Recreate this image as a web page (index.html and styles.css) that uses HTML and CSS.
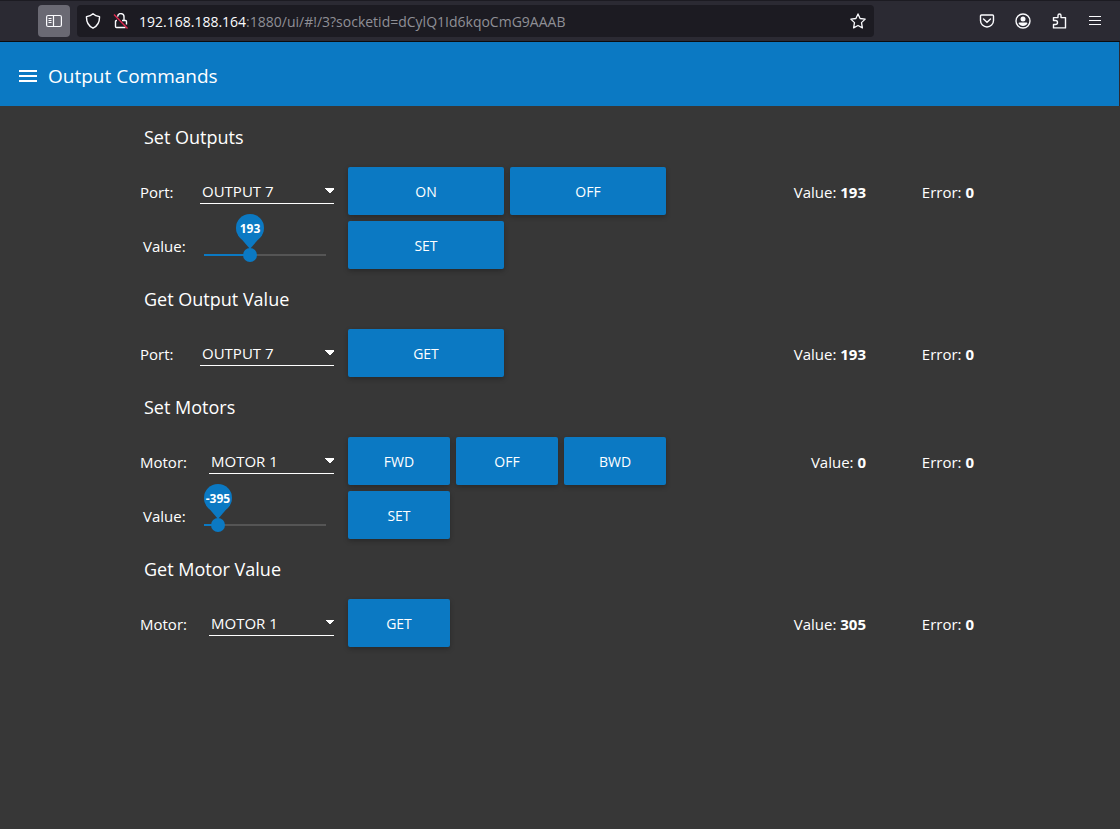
FILE: index.html
```html
<!DOCTYPE html>
<html lang="en">
<head>
    <meta charset="UTF-8">
    <meta name="viewport" content="width=device-width, initial-scale=1.0">
    <title>Output Commands</title>
    <link rel="stylesheet" href="styles.css">
</head>
<body>
    <div class="browser-bar">
        <button class="bar-button sidebar-button" aria-label="Sidebar">
            <svg width="16" height="16" viewBox="0 0 16 16" fill="none" stroke="currentColor" stroke-width="1.2">
                <rect x="0.6" y="2.5" width="14.8" height="11" rx="1.5" />
                <path d="M7.500 2.500v11M2.500 5.500h3M2.500 7.500h3M2.500 9.500h3" />
            </svg>
        </button>
        <div class="url-bar">
            <svg width="16" height="16" viewBox="0 0 16 16" fill="none" stroke="currentColor" stroke-width="1.4">
                <path d="M8 .8C6.500 2.200 4 3.200 1.500 3.600C1.300 8.500 3.400 13 8 15.200C12.600 13 14.700 8.500 14.500 3.600C12 3.200 9.500 2.200 8 .8Z" stroke-linejoin="round" />
            </svg>
            <svg class="lock" width="16" height="16" viewBox="0 0 16 16" fill="none" stroke="currentColor" stroke-width="1.4">
                <path d="M4.600 3.600A3.200 3.200 0 0 1 11 4v3.500M9 7.500h3.500a1 1 0 0 1 1 1v3M4 7.500H3.500a1 1 0 0 0-1 1v5a1 1 0 0 0 1 1h9" />
                <path d="M1 1.500l13.500 14" stroke="#e22850" />
            </svg>
            <p class="url-text"><span>192.168.188.164</span>:1880/ui/#!/3?socketid=dCylQ1Id6kqoCmG9AAAB</p>
            <svg width="16" height="16" viewBox="0 0 16 16" fill="none" stroke="currentColor" stroke-width="1.3" stroke-linejoin="round">
                <path d="M8 .9l2.100 4.600 5.100.6-3.700 3.500.9 5.300L8 12.500l-4.400 2.400.9-5.300L.8 6.100l5.100-.6Z" />
            </svg>
        </div>
        <div class="bar-tools">
            <button class="bar-button" aria-label="Pocket">
                <svg width="16" height="16" viewBox="0 0 16 16" fill="none" stroke="currentColor" stroke-width="1.4">
                    <path d="M2.500 2h11a1 1 0 0 1 1 1v4.500a6.500 6.500 0 0 1-13 0V3a1 1 0 0 1 1-1Z" />
                    <path d="M4.500 6l3.500 3.300L11.500 6" stroke-linecap="round" />
                </svg>
            </button>
            <button class="bar-button" aria-label="Account">
                <svg width="16" height="16" viewBox="0 0 16 16" fill="none" stroke="currentColor" stroke-width="1.4">
                    <circle cx="8" cy="8" r="7" />
                    <circle cx="8" cy="6" r="2.500" fill="currentColor" stroke="none" />
                    <path d="M3.500 10.200a1 1 0 0 1 1-.7h7a1 1 0 0 1 1 .7C11.500 12 10 13 8 13s-3.500-1-4.500-2.800Z" fill="currentColor" stroke="none" />
                </svg>
            </button>
            <button class="bar-button" aria-label="Extensions">
                <svg width="16" height="16" viewBox="0 0 16 16" fill="none" stroke="currentColor" stroke-width="1.4">
                    <path d="M2.500 7.500V4.600H7V2.500a1.500 1.500 0 0 1 3 0v2.100h4.500v10.300h-12V11.500h2a2 2 0 0 0 0-4Z" stroke-linejoin="round" />
                </svg>
            </button>
            <button class="bar-button" aria-label="Menu">
                <svg width="16" height="16" viewBox="0 0 16 16" fill="none" stroke="currentColor" stroke-width="1.2">
                    <path d="M2 3.500h12M2 7.500h12M2 11.500h12" />
                </svg>
            </button>
        </div>
    </div>

    <header class="toolbar">
        <button class="menu-button" aria-label="Open menu">
            <svg width="24" height="24" viewBox="0 0 24 24" fill="currentColor">
                <path d="M3 18h18v-2H3v2zm0-5h18v-2H3v2zm0-7v2h18V6H3z" />
            </svg>
        </button>
        <h1>Output Commands</h1>
    </header>

    <main class="group">
        <h2>Set Outputs</h2>
        <div class="field">
            <label for="set-port">Port:</label>
            <select id="set-port"><option>OUTPUT 7</option></select>
        </div>
        <button class="btn wide">ON</button>
        <button class="btn wide">OFF</button>
        <p class="value">Value: <b>193</b></p>
        <p class="error">Error: <b>0</b></p>

        <div class="field slider-field">
            <label for="output-value">Value:</label>
            <div class="slider" style="--pos: 0.377">
                <input type="range" id="output-value" min="0" max="512" value="193">
                <output class="pin" for="output-value">193</output>
            </div>
        </div>
        <button class="btn wide">SET</button>

        <h2>Get Output Value</h2>
        <div class="field">
            <label for="get-port">Port:</label>
            <select id="get-port"><option>OUTPUT 7</option></select>
        </div>
        <button class="btn wide">GET</button>
        <p class="value">Value: <b>193</b></p>
        <p class="error">Error: <b>0</b></p>

        <h2>Set Motors</h2>
        <div class="field motor">
            <label for="set-motor">Motor:</label>
            <select id="set-motor"><option>MOTOR 1</option></select>
        </div>
        <button class="btn">FWD</button>
        <button class="btn">OFF</button>
        <button class="btn">BWD</button>
        <p class="value">Value: <b>0</b></p>
        <p class="error">Error: <b>0</b></p>

        <div class="field slider-field">
            <label for="motor-value">Value:</label>
            <div class="slider" style="--pos: 0.114">
                <input type="range" id="motor-value" min="-512" max="512" value="-395">
                <output class="pin" for="motor-value">-395</output>
            </div>
        </div>
        <button class="btn">SET</button>

        <h2>Get Motor Value</h2>
        <div class="field motor">
            <label for="get-motor">Motor:</label>
            <select id="get-motor"><option>MOTOR 1</option></select>
        </div>
        <button class="btn">GET</button>
        <p class="value">Value: <b>305</b></p>
        <p class="error">Error: <b>0</b></p>
    </main>
</body>
</html>
```
FILE: styles.css
```css
* {
    box-sizing: border-box;
}

body {
    margin: 0;
    min-height: 100vh;
    background-color: #373737;
    color: #fff;
    font-family: "Open Sans", "Noto Sans", sans-serif;
    font-size: 15px;
}

button {
    font-family: inherit;
    color: inherit;
    border: none;
    padding: 0;
    background: none;
    cursor: pointer;
}

svg {
    display: block;
    flex: none;
}

/* Browser bar */
.browser-bar {
    display: flex;
    align-items: center;
    height: 42px;
    padding: 0 9px 0 38px;
    background-color: #2b2a33;
    border-top: 1px solid #1c1b22;
    border-bottom: 1px solid #0c0c0d;
    color: #fbfbfe;
}

.bar-button {
    display: flex;
    align-items: center;
    justify-content: center;
    width: 32px;
    height: 32px;
    border-radius: 4px;
}

.sidebar-button {
    background-color: #6a6973;
}

.url-bar {
    flex: 1;
    display: flex;
    align-items: center;
    height: 32px;
    margin-left: 7px;
    padding: 0 8px;
    border-radius: 4px;
    background-color: #1c1b22;
}

.lock {
    margin-left: 12px;
}

.url-text {
    flex: 1;
    margin: 0 0 0 10px;
    font-size: 14px;
    color: #8f8f96;
}

.url-text span {
    color: #fbfbfe;
}

.bar-tools {
    display: flex;
    gap: 4px;
    margin-left: 97px;
}

/* Page header */
.toolbar {
    display: flex;
    align-items: center;
    height: 64px;
    padding: 4px 16px 0;
    background-color: #0b79c3;
    border-right: 1px solid #2b2a33;
}

.menu-button {
    margin-right: 8px;
}

h1 {
    margin: 0;
    font-size: 19px;
    font-weight: 400;
}

/* Widget grid */
.group {
    display: grid;
    grid-template-columns: repeat(16, 48px);
    grid-auto-rows: 48px;
    gap: 6px;
    justify-content: center;
    align-items: center;
    padding: 7px 0 7px 2px;
}

h2 {
    grid-column: 1 / -1;
    margin: 0;
    padding-left: 12px;
    font-size: 18px;
    font-weight: 400;
}

.field {
    grid-column: 1 / span 4;
    display: flex;
    align-items: center;
    height: 48px;
    padding: 0 8px;
}

.field label {
    width: 60px;
    padding-top: 2px;
}

.field.motor label {
    width: 69px;
}

select {
    flex: 1;
    height: 26px;
    padding: 0 2px;
    appearance: none;
    border: none;
    border-bottom: 1px solid #fff;
    border-radius: 0;
    background: conic-gradient(from -45deg at 50% 100%, #fff 90deg, transparent 0) right -1px top 10px / 10px 5px no-repeat;
    color: inherit;
    font-family: inherit;
    font-size: 15px;
}

.slider-field {
    padding: 0 1px 0 11px;
}

.field.slider-field label {
    width: 54px;
}

.slider {
    position: relative;
    flex: none;
    width: 136px;
}

.slider input {
    display: block;
    width: 100%;
    height: 14px;
    margin: 20px 0 0;
    appearance: none;
    background: linear-gradient(to right, #0b79c3 calc(var(--pos) * 100%), #555 0) center / calc(100% - 14px) 2px no-repeat;
}

.slider input::-webkit-slider-thumb {
    appearance: none;
    width: 14px;
    height: 14px;
    border-radius: 50%;
    background-color: #0b79c3;
}

/* Value bubble over the thumb */
.pin {
    position: absolute;
    bottom: 20px;
    left: calc(7px + var(--pos) * (100% - 14px));
    width: 28px;
    height: 28px;
    margin-left: -14px;
    border-radius: 50%;
    background-color: #0b79c3;
    font-size: 12px;
    font-weight: 700;
    line-height: 30px;
    text-align: center;
}

.pin::after {
    content: "";
    position: absolute;
    top: 21px;
    left: 2px;
    border: 12px solid transparent;
    border-top: 14px solid #0b79c3;
    border-bottom: none;
}

.btn {
    grid-column: span 2;
    height: 48px;
    border-radius: 2px;
    background-color: #0b79c3;
    box-shadow: 0 2px 5px rgba(0, 0, 0, 0.26);
    font-size: 14px;
}

.btn.wide {
    grid-column: span 3;
}

.value,
.error {
    margin: 0;
    padding-top: 2px;
    text-align: right;
}

.value {
    grid-column: 12 / span 3;
    padding-right: 16px;
}

.error {
    grid-column: 15 / span 2;
    padding-right: 16px;
}
```
